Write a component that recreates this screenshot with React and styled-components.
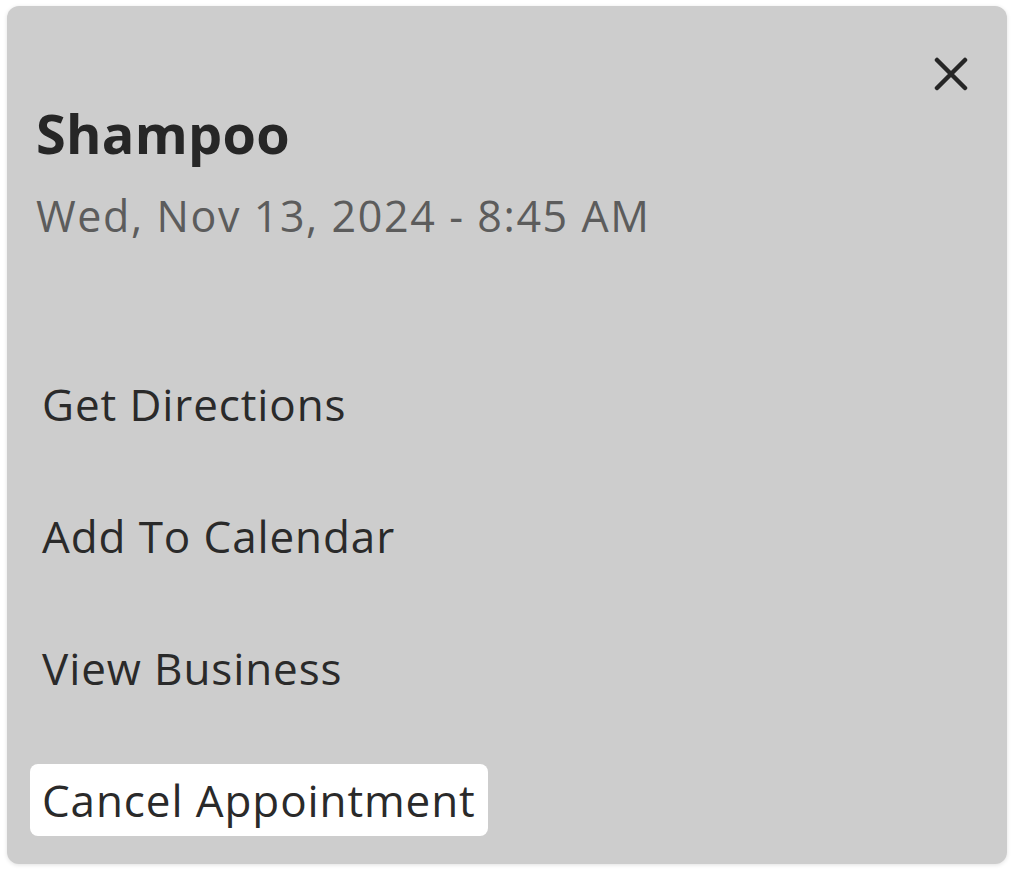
import React from 'react';
import styled, { createGlobalStyle } from 'styled-components';

const GlobalStyle = createGlobalStyle`
  html, body {
    margin: 0;
    padding: 0;
    background: #ffffff;
  }
  body {
    font-family: "Open Sans", Lato, sans-serif;
  }
`;

const Page = styled.div`
  padding: 6px 8px 7px 7px;
`;

const Card = styled.div`
  width: 1000px;
  height: 858px;
  box-sizing: border-box;
  background: #cdcdcd;
  border-radius: 12px;
  box-shadow: 0 1px 4px rgba(0, 0, 0, 0.12);
  display: flex;
  flex-direction: column;
  padding: 51px 39px 0 23px;
`;

const Header = styled.div`
  display: flex;
  justify-content: flex-end;
`;

const CloseButton = styled.button`
  width: 34px;
  height: 34px;
  padding: 0;
  border: none;
  background: transparent;
  cursor: pointer;
  display: flex;
  align-items: center;
  justify-content: center;
`;

const Title = styled.h2`
  margin: 12px 0 0;
  padding-left: 6px;
  font-size: 54px;
  line-height: 60px;
  font-weight: 700;
  letter-spacing: 0.3px;
  color: #262626;
`;

const DateLine = styled.div`
  margin-top: 29px;
  padding-left: 6px;
  font-size: 43px;
  line-height: 48px;
  letter-spacing: 1.6px;
  color: #5c5c5c;
`;

const Menu = styled.div`
  margin-top: 128px;
  display: flex;
  flex-direction: column;
  align-items: flex-start;
  gap: 60px;
`;

const MenuItem = styled.button`
  height: 72px;
  padding: 0 12px;
  border: none;
  border-radius: 8px;
  background: ${(p) => (p.$active ? '#ffffff' : 'transparent')};
  font-family: "Open Sans", Lato, sans-serif;
  font-size: 44px;
  letter-spacing: 0.9px;
  color: #2a2a2a;
  cursor: pointer;
  display: flex;
  align-items: center;
`;

const items = ['Get Directions', 'Add To Calendar', 'View Business', 'Cancel Appointment'];

export default function App() {
  return (
    <Page>
      <GlobalStyle />
      <Card>
        <Header>
          <CloseButton aria-label="Close">
            <svg width="34" height="34" viewBox="0 0 34 34">
              <path d="M3 3 L31 31 M31 3 L3 31" stroke="#262626" strokeWidth="4.5" strokeLinecap="round" />
            </svg>
          </CloseButton>
        </Header>
        <Title>Shampoo</Title>
        <DateLine>Wed, Nov 13, 2024 - 8:45 AM</DateLine>
        <Menu>
          {items.map((item, i) => (
            <MenuItem key={item} $active={i === items.length - 1}>
              {item}
            </MenuItem>
          ))}
        </Menu>
      </Card>
    </Page>
  );
}
